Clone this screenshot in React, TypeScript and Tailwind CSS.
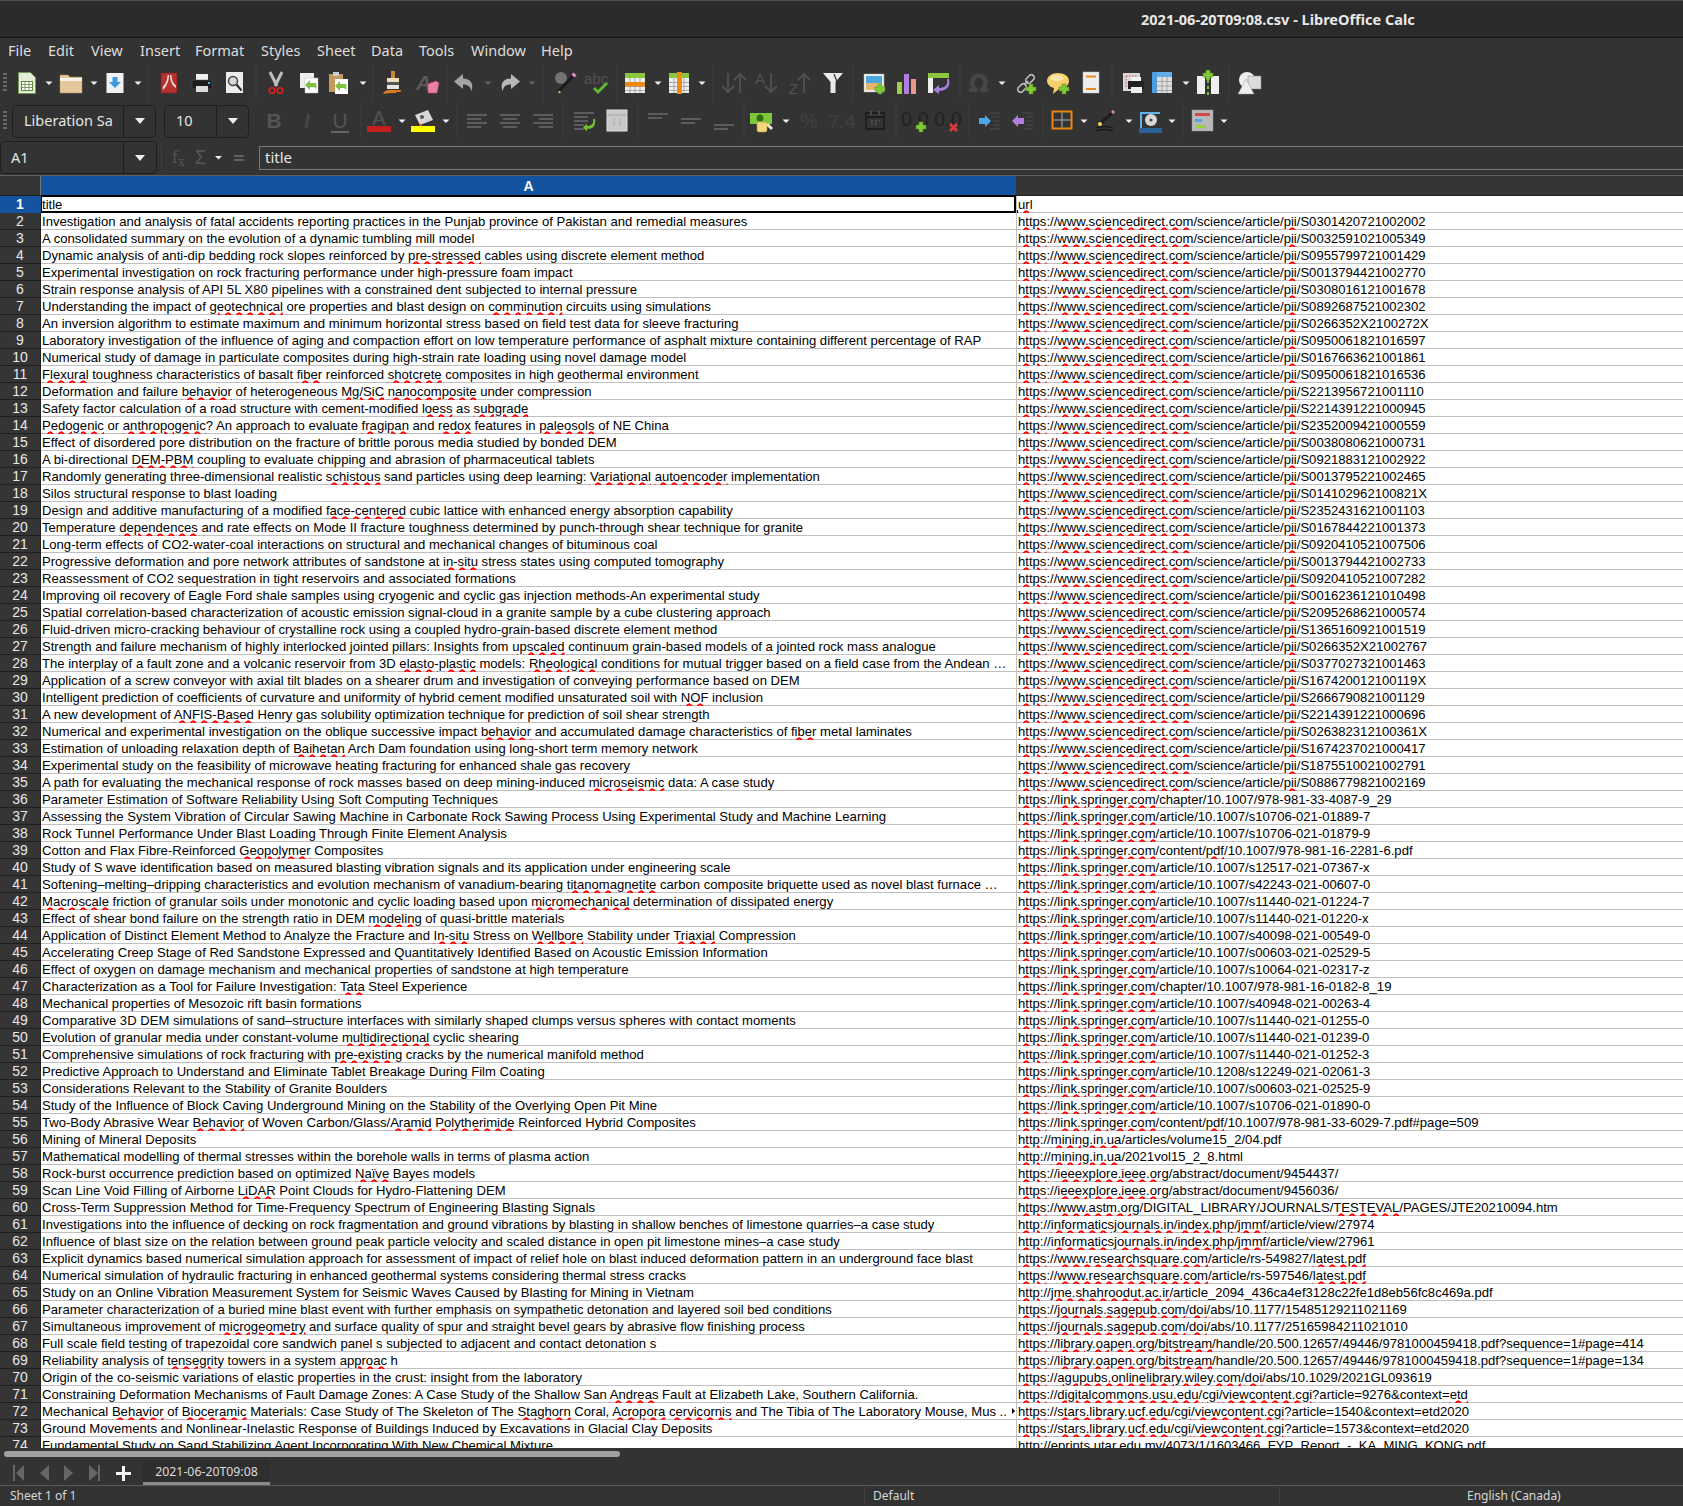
import type { ReactNode } from 'react';

const SD = (id: string) => `~https~://~www.sciencedirect.com~/science/article/~pii~/${id}`;
const SP = (rest: string) => `~https~://~link.springer.com~/${rest}`;
const SA = (id: string) => SP(`article/10.1007/${id}`);

const ROWS: [string, string][] = [
  ['title', '~url~'],
  ['Investigation and analysis of fatal accidents reporting practices in the Punjab province of Pakistan and remedial measures', SD('S0301420721002002')],
  ['A consolidated summary on the evolution of a dynamic tumbling mill model', SD('S0032591021005349')],
  ['Dynamic analysis of anti-dip bedding rock slopes reinforced by ~pre-stressed~ cables using discrete element method', SD('S0955799721001429')],
  ['Experimental investigation on rock fracturing performance under high-pressure foam impact', SD('S0013794421002770')],
  ['Strain response analysis of API 5L X80 pipelines with a constrained dent subjected to internal pressure', SD('S0308016121001678')],
  ['Understanding the impact of ~geotechnical~ ore properties and blast design on ~comminution~ circuits using simulations', SD('S0892687521002302')],
  ['An inversion algorithm to estimate maximum and minimum horizontal stress based on field test data for sleeve fracturing', SD('S0266352X2100272X')],
  ['Laboratory investigation of the influence of aging and compaction effort on low temperature performance of asphalt mixture containing different percentage of RAP', SD('S0950061821016597')],
  ['Numerical study of damage in particulate composites during high-strain rate loading using novel damage model', SD('S0167663621001861')],
  ['~Flexural~ toughness characteristics of basalt ~fiber~ reinforced ~shotcrete~ composites in high geothermal environment', SD('S0950061821016536')],
  ['Deformation and failure ~behavior~ of heterogeneous ~Mg/SiC~ ~nanocomposite~ under compression', SD('S2213956721001110')],
  ['Safety factor calculation of a road structure with cement-modified ~loess~ as ~subgrade~', SD('S2214391221000945')],
  ['~Pedogenic~ or ~anthropogenic~? An approach to evaluate ~fragipan~ and ~redox~ features in ~paleosols~ of NE China', SD('S2352009421000559')],
  ['Effect of disordered pore distribution on the fracture of brittle porous media studied by bonded DEM', SD('S0038080621000731')],
  ['A bi-directional ~DEM-PBM~ coupling to evaluate chipping and abrasion of pharmaceutical tablets', SD('S0921883121002922')],
  ['Randomly generating three-dimensional realistic ~schistous~ sand particles using deep learning: ~Variational~ ~autoencoder~ implementation', SD('S0013795221002465')],
  ['Silos structural response to blast loading', SD('S014102962100821X')],
  ['Design and additive manufacturing of a modified ~face-centered~ cubic lattice with enhanced energy absorption capability', SD('S2352431621001103')],
  ['Temperature ~dependences~ and rate effects on Mode II fracture toughness determined by punch-through shear technique for granite', SD('S0167844221001373')],
  ['Long-term effects of CO2-water-coal interactions on structural and mechanical changes of bituminous coal', SD('S0920410521007506')],
  ['Progressive deformation and pore network attributes of sandstone at ~in-situ~ stress states using computed tomography', SD('S0013794421002733')],
  ['Reassessment of CO2 sequestration in tight reservoirs and associated formations', SD('S0920410521007282')],
  ['Improving oil recovery of Eagle Ford shale samples using cryogenic and cyclic gas injection methods-An experimental study', SD('S0016236121010498')],
  ['Spatial correlation-based characterization of acoustic emission signal-cloud in a granite sample by a cube clustering approach', SD('S2095268621000574')],
  ['Fluid-driven micro-cracking behaviour of crystalline rock using a coupled hydro-grain-based discrete element method', SD('S1365160921001519')],
  ['Strength and failure mechanism of highly interlocked jointed pillars: Insights from ~upscaled~ continuum grain-based models of a jointed rock mass analogue', SD('S0266352X21002767')],
  ['The interplay of a fault zone and a volcanic reservoir from 3D ~elasto-plastic~ models: ~Rheological~ conditions for mutual trigger based on a field case from the Andean …', SD('S0377027321001463')],
  ['Application of a screw conveyor with axial tilt blades on a shearer drum and investigation of conveying performance based on DEM', SD('S167420012100119X')],
  ['Intelligent prediction of coefficients of curvature and uniformity of hybrid cement modified unsaturated soil with ~NOF~ inclusion', SD('S2666790821001129')],
  ['A new development of ~ANFIS-Based~ Henry gas solubility optimization technique for prediction of soil shear strength', SD('S2214391221000696')],
  ['Numerical and experimental investigation on the oblique successive impact ~behavior~ and accumulated damage characteristics of ~fiber~ metal laminates', SD('S026382312100361X')],
  ['Estimation of unloading relaxation depth of ~Baihetan~ Arch Dam foundation using long-short term memory network', SD('S1674237021000417')],
  ['Experimental study on the feasibility of microwave heating fracturing for enhanced shale gas recovery', SD('S1875510021002791')],
  ['A path for evaluating the mechanical response of rock masses based on deep mining-induced ~microseismic~ data: A case study', SD('S0886779821002169')],
  ['Parameter Estimation of Software Reliability Using Soft Computing Techniques', SP('chapter/10.1007/978-981-33-4087-9_29')],
  ['Assessing the System Vibration of Circular Sawing Machine in Carbonate Rock Sawing Process Using Experimental Study and Machine Learning', SA('s10706-021-01889-7')],
  ['Rock Tunnel Performance Under Blast Loading Through Finite Element Analysis', SA('s10706-021-01879-9')],
  ['Cotton and Flax Fibre-Reinforced ~Geopolymer~ Composites', SP('content/~pdf~/10.1007/978-981-16-2281-6.pdf')],
  ['Study of S wave identification based on measured blasting vibration signals and its application under engineering scale', SA('s12517-021-07367-x')],
  ['Softening–melting–dripping characteristics and evolution mechanism of vanadium-bearing ~titanomagnetite~ carbon composite briquette used as novel blast furnace …', SA('s42243-021-00607-0')],
  ['~Macroscale~ friction of granular soils under monotonic and cyclic loading based upon ~micromechanical~ determination of dissipated energy', SA('s11440-021-01224-7')],
  ['Effect of shear bond failure on the strength ratio in DEM ~modeling~ of quasi-brittle materials', SA('s11440-021-01220-x')],
  ['Application of Distinct Element Method to Analyze the Fracture and ~In-situ~ Stress on ~Wellbore~ Stability under ~Triaxial~ Compression', SA('s40098-021-00549-0')],
  ['Accelerating Creep Stage of Red Sandstone Expressed and Quantitatively Identified Based on Acoustic Emission Information', SA('s00603-021-02529-5')],
  ['Effect of oxygen on damage mechanism and mechanical properties of sandstone at high temperature', SA('s10064-021-02317-z')],
  ['Characterization as a Tool for Failure Investigation: ~Tata~ Steel Experience', SP('chapter/10.1007/978-981-16-0182-8_19')],
  ['Mechanical properties of Mesozoic rift basin formations', SA('s40948-021-00263-4')],
  ['Comparative 3D DEM simulations of sand–structure interfaces with similarly shaped clumps versus spheres with contact moments', SA('s11440-021-01255-0')],
  ['Evolution of granular media under constant-volume ~multidirectional~ cyclic shearing', SA('s11440-021-01239-0')],
  ['Comprehensive simulations of rock fracturing with ~pre-existing~ cracks by the numerical manifold method', SA('s11440-021-01252-3')],
  ['Predictive Approach to Understand and Eliminate Tablet Breakage During Film Coating', SP('article/10.1208/s12249-021-02061-3')],
  ['Considerations Relevant to the Stability of Granite Boulders', SA('s00603-021-02525-9')],
  ['Study of the Influence of Block Caving Underground Mining on the Stability of the Overlying Open Pit Mine', SA('s10706-021-01890-0')],
  ['Two-Body Abrasive Wear ~Behavior~ of Woven Carbon/Glass/~Aramid~ ~Polytherimide~ Reinforced Hybrid Composites', SP('content/~pdf~/10.1007/978-981-33-6029-7.pdf#page=509')],
  ['Mining of Mineral Deposits', '~http~://~mining.in.ua~/articles/volume15_2/04.pdf'],
  ['Mathematical modelling of thermal stresses within the borehole walls in terms of plasma action', '~http~://~mining.in.ua~/2021vol15_2_8.html'],
  ['Rock-burst occurrence prediction based on optimized ~Naïve~ Bayes models', '~https~://~ieeexplore.ieee.org~/abstract/document/9454437/'],
  ['Scan Line Void Filling of Airborne ~LiDAR~ Point Clouds for Hydro-Flattening DEM', '~https~://~ieeexplore.ieee.org~/abstract/document/9456036/'],
  ['Cross-Term Suppression Method for Time-Frequency Spectrum of Engineering Blasting Signals', '~https~://~www.astm.org~/DIGITAL_LIBRARY/JOURNALS/~TESTEVAL~/PAGES/JTE20210094.htm'],
  ['Investigations into the influence of decking on rock fragmentation and ground vibrations by blasting in shallow benches of limestone quarries–a case study', '~http~://~informaticsjournals.in~/~index.php~/~jmmf~/article/view/27974'],
  ['Influence of blast size on the relation between ground peak particle velocity and scaled distance in open pit limestone mines–a case study', '~http~://~informaticsjournals.in~/~index.php~/~jmmf~/article/view/27961'],
  ['Explicit dynamics based numerical simulation approach for assessment of impact of relief hole on blast induced deformation pattern in an underground face blast', '~https~://~www.researchsquare.com~/article/rs-549827/~latest.pdf~'],
  ['Numerical simulation of hydraulic fracturing in enhanced geothermal systems considering thermal stress cracks', '~https~://~www.researchsquare.com~/article/rs-597546/~latest.pdf~'],
  ['Study on an Online Vibration Measurement System for Seismic Waves Caused by Blasting for Mining in Vietnam', '~http~://~jme.shahroodut.ac.ir~/article_2094_436ca4ef3128c22fe1d8eb56fc8c469a.pdf'],
  ['Parameter characterization of a buried mine blast event with further emphasis on sympathetic detonation and layered soil bed conditions', '~https~://~journals.sagepub.com~/~doi~/abs/10.1177/15485129211021169'],
  ['Simultaneous improvement of ~microgeometry~ and surface quality of spur and straight bevel gears by abrasive flow finishing process', '~https~://~journals.sagepub.com~/~doi~/abs/10.1177/25165984211021010'],
  ['Full scale field testing of trapezoidal core sandwich panel s subjected to adjacent and contact detonation s', '~https~://~library.oapen.org~/~bitstream~/handle/20.500.12657/49446/9781000459418.pdf?sequence=1#page=414'],
  ['Reliability analysis of ~tensegrity~ towers in a system ~approac~ h', '~https~://~library.oapen.org~/~bitstream~/handle/20.500.12657/49446/9781000459418.pdf?sequence=1#page=134'],
  ['Origin of the co-seismic variations of elastic properties in the crust: insight from the laboratory', '~https~://~agupubs.onlinelibrary.wiley.com~/~doi~/abs/10.1029/2021GL093619'],
  ['Constraining Deformation Mechanisms of Fault Damage Zones: A Case Study of the Shallow San ~Andreas~ Fault at Elizabeth Lake, Southern California.', '~https~://~digitalcommons.usu.edu~/~cgi~/~viewcontent.cgi~?article=9276&context=~etd~'],
  ['Mechanical ~Behavior~ of ~Bioceramic~ Materials: Case Study of The Skeleton of The ~Staghorn~ Coral, ~Acropora~ ~cervicornis~ and The Tibia of The Laboratory Mouse, Mus ..', '~https~://~stars.library.ucf.edu~/~cgi~/~viewcontent.cgi~?article=1540&context=etd2020'],
  ['Ground Movements and Nonlinear-Inelastic Response of Buildings Induced by Excavations in Glacial Clay Deposits', '~https~://~stars.library.ucf.edu~/~cgi~/~viewcontent.cgi~?article=1573&context=etd2020'],
  ['Fundamental Study on Sand Stabilizing Agent Incorporating With New Chemical Mixture', 'http://eprints.utar.edu.my/4073/1/1603466_FYP_Report_-_KA_MING_KONG.pdf'],
];

const MENU: [string, string][] = [
  ['File', 'w-[40px]'], ['Edit', 'w-[43px]'], ['View', 'w-[49px]'], ['Insert', 'w-[55px]'], ['Format', 'w-[66px]'], ['Styles', 'w-[56px]'],
  ['Sheet', 'w-[54px]'], ['Data', 'w-[48px]'], ['Tools', 'w-[52px]'], ['Window', 'w-[70px]'], ['Help', 'w-[50px]'],
];

function Rich({ t }: { t: string }) {
  return (
    <>
      {t.split('~').map((s, i) =>
        i % 2 ? (
          <span key={i} className="underline decoration-wavy decoration-[#ff0000] decoration-[1.5px] underline-offset-[1px]">{s}</span>
        ) : (
          s
        ),
      )}
    </>
  );
}

function Ico({ children }: { children: ReactNode }) {
  return <svg width="24" height="24" viewBox="0 0 24 24" className="shrink-0 overflow-visible">{children}</svg>;
}

// one toolbar slot: 24px icon box, slot width is the distance to the next slot
function T({ w, children }: { w: string; children: ReactNode }) {
  return <div className={`${w} shrink-0 h-6 flex items-center`}>{children}</div>;
}

const Plus = ({ x, y }: { x: number; y: number }) => (
  <path d={`M${x - 2} ${y - 5}h4v3h3v4h-3v3h-4v-3h-3v-4h3z`} fill="#80c935" stroke="#4f8a1c" strokeWidth=".5" />
);
const Drop = () => <Ico><path d="M8.5 10.5h7l-3.5 3.5z" fill="#eeeeee" /></Ico>;
const DimDrop = () => <Ico><path d="M8.5 10.5h7l-3.5 3.5z" fill="#5e5e5e" /></Ico>;
const Sep = () => <Ico><path d="M12 -6v36" stroke="#3f3f3f" strokeWidth="1" /></Ico>;
const Handle = () => (
  <div className="w-[4px] h-[20px] ml-[3px] shrink-0 flex flex-col gap-[2px]">
    {[0, 1, 2, 3, 4].map((i) => <div key={i} className="h-[2px] bg-[#6a6a6a]" />)}
  </div>
);

const Table = ({ children }: { children?: ReactNode }) => (
  <>
    <rect x="2" y="2" width="20" height="5" fill="#8cc63f" />
    <rect x="2" y="7" width="20" height="15" fill="#eeeeee" />
    {children}
    <path d="M2 11.5h20M2 15.5h20M2 19.5h20M7 7v15M12 7v15M17 7v15" stroke="#9a9a9a" strokeWidth=".8" />
  </>
);

const NewDoc = () => <Ico><path d="M3.5 1.5h12l5 5v16h-17z" fill="#e3ecd8" stroke="#6f9a50" /><rect x="6.5" y="10.5" width="11" height="9" fill="#fff" stroke="#5e8c3c" /><path d="M6.5 13.5h11M6.5 16.500h11M10 10.500v9M14 10.500v9" stroke="#5e8c3c" strokeWidth=".8" /></Ico>;
const Folder = () => <Ico><path d="M1 4h8l2 2h12v16H1z" fill="#e5c99c" stroke="#b08d5c" strokeWidth=".5" /><rect x="1" y="7" width="22" height="3" fill="#f6f2ea" /></Ico>;
const Save = () => <Ico><rect x="3.500" y="2" width="17" height="20" fill="#f1f1f1" /><path d="M9.500 6h5v5h3.500l-6 6-6-6h3.500z" fill="#3d9ae0" /></Ico>;
const Pdf = () => <Ico><rect x="4" y="2" width="16" height="20" fill="#b5302e" stroke="#8a2120" strokeWidth=".6" /><path d="M6 19c3-3 6-8 6-15h-1.500c0 5-2.500 10-5 12zM13 4c0 6 2 11 6 13v-2.500c-3-2-4.500-6-4.500-10.500z" fill="#f0d8d0" /></Ico>;
const Printer = () => <Ico><rect x="6" y="3" width="12" height="7" fill="#efefef" /><rect x="2" y="9" width="20" height="9" rx="2" fill="#1c1c1c" stroke="#555" strokeWidth=".5" /><rect x="6" y="15" width="12" height="6" fill="#dcdcdc" /><rect x="18" y="11" width="2" height="2" fill="#35c0f0" /></Ico>;
const Preview = () => <Ico><rect x="3" y="1" width="17" height="21" fill="#ededed" /><circle cx="10" cy="10" r="4.500" fill="#d8d8d8" stroke="#444" strokeWidth="1.500" /><path d="M13.500 13.500l5 6" stroke="#2a2a2a" strokeWidth="2" /></Ico>;
const Cut = () => <Ico><path d="M6 1l7 14M18 1l-7 14" stroke="#bdbdbd" strokeWidth="3" /><circle cx="8" cy="19.500" r="2.800" fill="none" stroke="#e02020" strokeWidth="1.600" /><circle cx="16" cy="19.500" r="2.800" fill="none" stroke="#e02020" strokeWidth="1.600" /></Ico>;
const GreenArrow = ({ x, y }: { x: number; y: number }) => <path d={`M${x + 6} ${y - 2}h-6v-3l-5 5 5 5v-3h3c2 0 3 1 3 3 1-4 0-7 0-7z`} fill="#7cc340" />;
const Copy = () => <Ico><rect x="3" y="2" width="14" height="15" fill="#eeeeee" /><rect x="8" y="7" width="13" height="15" fill="#fff" stroke="#bbb" strokeWidth=".5" /><GreenArrow x={13} y={14} /></Ico>;
const Paste = () => <Ico><rect x="2" y="3" width="14" height="18" fill="#c4985a" /><rect x="6" y="1" width="6" height="4" fill="#cccccc" /><rect x="8" y="8" width="13" height="15" fill="#fff" /><GreenArrow x={13} y={15} /></Ico>;
const Clone = () => <Ico><rect x="10" y="0" width="4" height="7" fill="#c8873a" /><rect x="6" y="7" width="12" height="4" fill="#f0dfb8" /><rect x="6" y="11" width="12" height="3" fill="#555" /><rect x="6" y="14" width="12" height="4" fill="#e6e6e6" /><path d="M2 23c1-3 4-4 6-4h12c1 2-2 2-4 2l-2 1c-4 0-8 0-12 1z" fill="#e07b1c" /></Ico>;
const Clear = () => <Ico><text x="0" y="19" fontSize="21" fontStyle="italic" fontWeight="700" fill="#5a5a5a" fontFamily="Liberation Sans">A</text><path d="M12 13l8-3 3 2-2 10h-9z" fill="#ea7fa6" stroke="#b04a70" strokeWidth=".5" /></Ico>;
const Undo = () => <Ico><path d="M10 3L1 10.500l9 7.500v-4.500c5 0 7.500 2 8.500 7 2.500-8-.5-12.500-8.500-13z" fill="#a4a4a4" /></Ico>;
const Redo = () => <Ico><path d="M14 3l9 7.500-9 7.500v-4.500c-5 0-7.500 2-8.500 7-2.500-8 .5-12.500 8.500-13z" fill="#b8b8b8" /></Ico>;
const FindRep = () => <Ico><circle cx="8" cy="7" r="6" fill="#737373" /><path d="M21 4L6 20" stroke="#1c1c1c" strokeWidth="3" /><path d="M19.500 2.500l3 3" stroke="#e58ac0" strokeWidth="3" /><path d="M6.500 19.500l-1.500 3 3-1z" fill="#e8d95c" /></Ico>;
const Spell = () => <Ico><text x="-1" y="13" fontSize="15" fill="#515151" fontFamily="Liberation Sans">abc</text><path d="M9 17l4 4 9-9" fill="none" stroke="#62b82e" strokeWidth="3" /></Ico>;
const Rows = () => <Ico><Table /><rect x="2" y="11" width="20" height="4.500" fill="#f08a10" /></Ico>;
const Cols = () => <Ico><Table /><rect x="10" y="1" width="5" height="22" fill="#f08a10" /></Ico>;
const Arrow = ({ x, up }: { x: number; up: boolean }) => (
  <path d={up ? `M${x} 22V3M${x - 6} 9l6-6 6 6` : `M${x} 2v19M${x - 6} 15l6 6 6-6`} fill="none" stroke="#525252" strokeWidth="1.800" />
);
const Sort = () => <Ico><Arrow x={6} up={false} /><Arrow x={18} up={true} /></Ico>;
const SortA = () => <Ico><text x="-1" y="13" fontSize="15" fill="#525252" fontFamily="Liberation Sans">A</text><Arrow x={15} up={false} /></Ico>;
const SortZ = () => <Ico><text x="0" y="23" fontSize="15" fill="#525252" fontFamily="Liberation Sans">Z</text><Arrow x={15} up={true} /></Ico>;
const Filter = () => <Ico><path d="M2 2h20l-7.500 9v11h-5V11z" fill="#eaeaea" /><path d="M13 3l7 18" stroke="#333" strokeWidth="1.200" /></Ico>;
const ImageIco = () => <Ico><rect x="2" y="3" width="20" height="18" fill="#f2f2f2" stroke="#aaa" strokeWidth=".5" /><rect x="4" y="5" width="16" height="7" fill="#4aa6de" /><rect x="4" y="12" width="16" height="7" fill="#e5b56a" /><Plus x={18} y={18} /></Ico>;
const Chart = () => <Ico><rect x="2" y="11" width="5" height="12" fill="#9bd04b" /><rect x="9" y="3" width="5" height="20" fill="#b07fe0" /><rect x="16" y="8" width="5" height="15" fill="#e89a88" /></Ico>;
const Pivot = () => <Ico><rect x="1" y="2" width="21" height="5" fill="#8cc63f" /><rect x="1" y="7" width="5" height="15" fill="#eeeeee" /><path d="M20 8c1 6-2 9-8 9v-3l-6 5 6 4v-3c7 0 12-4 10-12z" fill="#a77fd8" /></Ico>;
const Omega = () => <Ico><text x="1.500" y="21" fontSize="24" fontWeight="700" fill="#474747" fontFamily="DejaVu Sans">Ω</text></Ico>;
const Link = () => <Ico><path d="M4 17l4-4a3 3 0 0 1 4 4l-4 4a3 3 0 0 1-4-4zM12 8l4-4a3 3 0 0 1 4 4l-4 4a3 3 0 0 1-4-4z" fill="none" stroke="#bdbdbd" strokeWidth="1.600" /><path d="M10 14l4-4" stroke="#bdbdbd" strokeWidth="1.600" /><Plus x={17} y={18} /></Ico>;
const Comment = () => <Ico><path d="M12 2c6 0 11 3 11 8s-5 8-10 8l-6 5 1-6C4 16 1 13 1 10c0-5 5-8 11-8z" fill="#f7cf6b" /><ellipse cx="11" cy="7" rx="7" ry="3" fill="#fbe6ac" /><Plus x={18} y={18} /></Ico>;
const Header = () => <Ico><rect x="4" y="1" width="16" height="21" fill="#eeeeee" stroke="#bdbdbd" strokeWidth=".5" /><path d="M7 5.500h10M7 18h10" stroke="#ee8a1c" strokeWidth="2" /></Ico>;
const PrintArea = () => <Ico><rect x="2" y="2" width="17" height="18" fill="#d8d8d8" /><path d="M5 5h11M5 5v12" stroke="#d84c4c" strokeWidth="1" strokeDasharray="1.500 1.500" /><rect x="10" y="6" width="10" height="5" fill="#f4f4f4" /><rect x="7" y="10" width="16" height="8" fill="#222" /><rect x="10" y="16" width="11" height="6" fill="#eeeeee" /></Ico>;
const Freeze = () => <Ico><rect x="2" y="1" width="20" height="21" fill="#dedede" /><rect x="2" y="1" width="20" height="5" fill="#63aee8" /><rect x="2" y="1" width="5" height="21" fill="#4d9ee0" /><path d="M7 10.500h15M7 15h15M7 19.500h15M12 6v16M17 6v16" stroke="#9a9a9a" strokeWidth=".8" /></Ico>;
const Split = () => <Ico><rect x="1" y="5" width="8" height="18" fill="#eeeeee" /><rect x="15" y="5" width="8" height="18" fill="#eeeeee" /><path d="M12 3v21" stroke="#78c035" strokeWidth="2" strokeDasharray="3 3" /><Plus x={12} y={4} /></Ico>;
const Shapes = () => <Ico><circle cx="9" cy="9" r="8" fill="#eeeeee" /><rect x="10" y="5" width="13" height="13" fill="#dcdcdc" stroke="#8a8a8a" strokeWidth=".5" /><path d="M8 8l8 15H0z" fill="#eeeeee" stroke="#9a9a9a" strokeWidth=".5" /></Ico>;

const Letter = ({ c, italic, under }: { c: string; italic?: boolean; under?: boolean }) => (
  <Ico>
    <text x="12" y="19" textAnchor="middle" fontSize="21" fontWeight={under ? 400 : 700} fontStyle={italic ? 'italic' : 'normal'} fill={italic ? '#474747' : '#555555'} fontFamily="Liberation Sans">{c}</text>
    {under && <path d="M3 23h18" stroke="#777" strokeWidth="1.500" />}
  </Ico>
);
const FontColor = () => <Ico><text x="12" y="16" textAnchor="middle" fontSize="20" fill="#525252" fontFamily="Liberation Sans">A</text><rect x="0" y="17" width="24" height="6" fill="#c41f1f" /></Ico>;
const BgColor = () => <Ico><path d="M4 6l13-5 5 10-13 5z" fill="#d8d8d8" /><circle cx="11" cy="8" r="2" fill="#555" /><path d="M8 17l2-3 1 3z" fill="#e8701c" /><rect x="0" y="17" width="24" height="6" fill="#ffff00" /></Ico>;
const Lines = ({ d }: { d: string }) => <Ico><path d={d} stroke="#6b6b6b" strokeWidth="1.600" /></Ico>;
const Wrap = () => <Ico><path d="M2 4h20M2 8h14M2 12h14M2 16h10M2 20h10" stroke="#6b6b6b" strokeWidth="1.600" /><path d="M21 10c1 5-2 7-6 7v-2.500l-4 4 4 4v-2.500c6 0 9-3 8-10z" fill="#74bb36" /></Ico>;
const Merge = () => <Ico><rect x="2" y="1" width="20" height="21" fill="#c8c8c8" stroke="#e2e2e2" /><path d="M9 9v8M15 9v8M2 6h20" stroke="#a8a8a8" /></Ico>;
const Currency = () => <Ico><rect x="0" y="4" width="22" height="11" fill="#7fc73a" /><circle cx="10" cy="9" r="3.500" fill="#2f6e18" /><rect x="7" y="13" width="10" height="10" rx="2" fill="#f2d67a" stroke="#b79640" strokeWidth=".5" /><path d="M17 15l5 5" stroke="#eee6c0" strokeWidth="3" /></Ico>;
const Pct = () => <Ico><text x="12" y="19" textAnchor="middle" fontSize="20" fontWeight="700" fill="#3e3e3e" fontFamily="Liberation Sans">%</text></Ico>;
const Num = () => <Ico><text x="12" y="19" textAnchor="middle" fontSize="19" fontWeight="700" fill="#3e3e3e" fontFamily="Liberation Sans">7.4</text></Ico>;
const DateIco = () => <Ico><rect x="3" y="4" width="18" height="16" fill="none" stroke="#1e1e1e" strokeWidth="2" /><path d="M3 8h18" stroke="#1e1e1e" strokeWidth="2" /><path d="M8 2v4M16 2v4M8 12h2M12 12h2M16 12h1M8 15h2M12 15h2" stroke="#555" strokeWidth="1.500" /></Ico>;
const Dec = ({ del }: { del?: boolean }) => (
  <Ico>
    <text x="-2" y="17" fontSize="20" fill="#222222" fontFamily="Liberation Sans">0.0</text>
    {del ? <path d="M14 15l7 7M21 15l-7 7" stroke="#d63a3a" strokeWidth="3" /> : <Plus x={18} y={18} />}
  </Ico>
);
const Indent = ({ out }: { out?: boolean }) => (
  <Ico>
    <path d="M12 4h10M15 8h7M15 12h7M15 16h7M12 20h10" stroke="#444" strokeWidth="1.500" />
    {out ? <path d="M1 12l6-6v3h6v6H7v3z" fill="#b07fe0" /> : <path d="M13 12l-6-6v3H1v6h6v3z" fill="#4ba8e8" />}
  </Ico>
);
const Border = () => <Ico><rect x="2.500" y="2.500" width="19" height="17" fill="none" stroke="#ee8512" strokeWidth="2" /><path d="M12 3.500v15M3.500 11h17" stroke="#8c8c8c" strokeWidth="1.500" /></Ico>;
const LineStyle = () => <Ico><path d="M19 3L6 15" stroke="#1b1b1b" strokeWidth="3" /><path d="M18 4l2-2" stroke="#e58ac0" strokeWidth="3" /><circle cx="6" cy="15" r="2" fill="#e8d95c" /><path d="M2 19c5-2 12-2 17 0M2 22c5-2 12-2 17 0" stroke="#151515" strokeWidth="1.200" fill="none" /></Ico>;
const BgStyle = () => <Ico><path d="M3 19V4h19" fill="none" stroke="#5fb2ea" strokeWidth="2" /><circle cx="13" cy="11" r="6" fill="#d8d8d8" /><circle cx="13" cy="11" r="1.500" fill="#444" /><rect x="1" y="19" width="23" height="5" fill="#2c6098" /></Ico>;
const Cond = () => <Ico><rect x="2" y="1" width="21" height="21" fill="#b8b8b8" stroke="#999" strokeWidth=".5" /><rect x="5" y="4" width="15" height="3" fill="#cf4a4a" /><rect x="5" y="10" width="7" height="3" fill="#4fa8e4" /><rect x="5" y="16" width="11" height="3" fill="#9bd04b" /></Ico>;

const Box = ({ label, w, split, lx }: { label: string; w: string; split: string; lx: string }) => (
  <div className={`${w} h-[33px] shrink-0 flex rounded-[5px] border border-[#1f1f1f]`}>
    <div className={`${split} h-full flex items-center ${lx} text-[#e6e6e6] text-[14.500px] border-r border-[#1f1f1f] whitespace-nowrap overflow-hidden`}>{label}</div>
    <div className="flex-1 flex items-center justify-center"><svg width="12" height="8" viewBox="0 0 12 8"><path d="M1 1h10L6 7z" fill="#eeeeee" /></svg></div>
  </div>
);

export default function App() {
  return (
    <div className="w-[1683px] h-[1506px] overflow-hidden flex flex-col bg-[#333333] text-[#e6e6e6] font-['Noto_Sans',sans-serif]">
      {/* title bar */}
      <div className="h-[38px] shrink-0 bg-[#2b2b2b] border-t border-t-[#4c4c4c] border-b border-b-[#111111] flex items-center pt-[1px] pl-[1141px] text-[14.500px] font-bold text-[#e8e8e8] whitespace-nowrap">
        2021-06-20T09:08.csv - LibreOffice Calc
      </div>

      {/* menu */}
      <div className="h-[26px] shrink-0 flex items-center pl-[8px] text-[14.500px] text-[#dedede]">
        {MENU.map(([m, w]) => <div key={m} className={`${w} shrink-0`}>{m}</div>)}
      </div>

      {/* standard toolbar */}
      <div className="h-[38px] shrink-0 flex items-center">
        <Handle />
        <div className="flex items-center pl-[8px]">
          <T w="w-[22px]"><NewDoc /></T><T w="w-[22px]"><Drop /></T><T w="w-[23px]"><Folder /></T><T w="w-[21px]"><Drop /></T><T w="w-[23px]"><Save /></T><T w="w-[10px]"><Drop /></T>
          <T w="w-[21px]"><Sep /></T><T w="w-[33px]"><Pdf /></T><T w="w-[33px]"><Printer /></T><T w="w-[21px]"><Preview /></T><T w="w-[20px]"><Sep /></T>
          <T w="w-[33px]"><Cut /></T><T w="w-[30px]"><Copy /></T><T w="w-[24px]"><Paste /></T><T w="w-[10px]"><Drop /></T><T w="w-[20px]"><Sep /></T>
          <T w="w-[35px]"><Clone /></T><T w="w-[19px]"><Clear /></T><T w="w-[18px]"><Sep /></T><T w="w-[23px]"><Undo /></T><T w="w-[21px]"><DimDrop /></T><T w="w-[23px]"><Redo /></T><T w="w-[11px]"><DimDrop /></T>
          <T w="w-[22px]"><Sep /></T><T w="w-[32px]"><FindRep /></T><T w="w-[20px]"><Spell /></T><T w="w-[18px]"><Sep /></T>
          <T w="w-[23px]"><Rows /></T><T w="w-[21px]"><Drop /></T><T w="w-[23px]"><Cols /></T><T w="w-[11px]"><Drop /></T><T w="w-[21px]"><Sep /></T>
          <T w="w-[34px]"><Sort /></T><T w="w-[33px]"><SortA /></T><T w="w-[32px]"><SortZ /></T><T w="w-[20px]"><Filter /></T><T w="w-[21px]"><Sep /></T>
          <T w="w-[33px]"><ImageIco /></T><T w="w-[32px]"><Chart /></T><T w="w-[21px]"><Pivot /></T><T w="w-[19px]"><Sep /></T>
          <T w="w-[23px]"><Omega /></T><T w="w-[24px]"><Drop /></T><T w="w-[32px]"><Link /></T><T w="w-[33px]"><Comment /></T><T w="w-[21px]"><Header /></T><T w="w-[21px]"><Sep /></T>
          <T w="w-[29px]"><PrintArea /></T><T w="w-[24px]"><Freeze /></T><T w="w-[22px]"><Drop /></T><T w="w-[21px]"><Split /></T><T w="w-[21px]"><Sep /></T><T w="w-[24px]"><Shapes /></T>
        </div>
      </div>

      {/* formatting toolbar */}
      <div className="h-[38px] shrink-0 flex items-center">
        <Handle />
        <div className="ml-[5px]"><Box label="Liberation Sa" w="w-[144px]" split="w-[111px]" lx="pl-[11px]" /></div>
        <div className="ml-[8px]"><Box label="10" w="w-[85px]" split="w-[52px]" lx="pl-[11px]" /></div>
        <div className="ml-[13px] flex items-center">
          <T w="w-[33px]"><Letter c="B" /></T><T w="w-[33px]"><Letter c="I" italic /></T><T w="w-[21px]"><Letter c="U" under /></T><T w="w-[18px]"><Sep /></T>
          <T w="w-[23px]"><FontColor /></T><T w="w-[21px]"><Drop /></T><T w="w-[23px]"><BgColor /></T><T w="w-[11px]"><Drop /></T><T w="w-[20px]"><Sep /></T>
          <T w="w-[33px]"><Lines d="M2 6h20M2 10h14M2 14h20M2 18h14" /></T><T w="w-[33px]"><Lines d="M2 6h20M5 10h14M2 14h20M5 18h14" /></T><T w="w-[20px]"><Lines d="M2 6h20M8 10h14M2 14h20M8 18h14" /></T><T w="w-[21px]"><Sep /></T>
          <T w="w-[33px]"><Wrap /></T><T w="w-[21px]"><Merge /></T><T w="w-[20px]"><Sep /></T>
          <T w="w-[33px]"><Lines d="M2 5h20M2 9h14" /></T><T w="w-[33px]"><Lines d="M2 10h20M2 14h14" /></T><T w="w-[20px]"><Lines d="M2 16h20M2 20h14" /></T><T w="w-[18px]"><Sep /></T>
          <T w="w-[24px]"><Currency /></T><T w="w-[23px]"><Drop /></T><T w="w-[33px]"><Pct /></T><T w="w-[33px]"><Num /></T><T w="w-[21px]"><DateIco /></T><T w="w-[19px]"><Sep /></T>
          <T w="w-[33px]"><Dec /></T><T w="w-[21px]"><Dec del /></T><T w="w-[21px]"><Sep /></T>
          <T w="w-[33px]"><Indent /></T><T w="w-[20px]"><Indent out /></T><T w="w-[19px]"><Sep /></T>
          <T w="w-[22px]"><Border /></T><T w="w-[22px]"><Drop /></T><T w="w-[23px]"><LineStyle /></T><T w="w-[21px]"><Drop /></T><T w="w-[22px]"><BgStyle /></T><T w="w-[11px]"><Drop /></T><T w="w-[19px]"><Sep /></T>
          <T w="w-[22px]"><Cond /></T><T w="w-[24px]"><Drop /></T>
        </div>
      </div>

      {/* formula bar */}
      <div className="h-[35px] shrink-0 flex items-center">
        <Box label="A1" w="w-[157px]" split="w-[123px]" lx="pl-[10px]" />
        <div className="w-px h-[26px] bg-[#3f3f3f] ml-[4px] shrink-0" />
        <div className="w-[97px] shrink-0 flex items-center">
          <div className="w-[10px]" />
          <span className="w-[23px] text-[16px] font-['DejaVu_Serif',serif] text-[#555555]">f<sub>x</sub></span>
          <span className="w-[14px] text-[19px] text-[#555555]">Σ</span>
          <svg width="10" height="8" viewBox="0 0 10 8" className="ml-[5px]"><path d="M1 2h7l-3.500 3.500z" fill="#eeeeee" /></svg>
          <span className="ml-[9px] text-[20px] font-bold text-[#636363]">=</span>
        </div>
        <div className="flex-1 h-[24px] border border-r-0 border-[#7a7a7a] flex items-center pl-[5px] text-[15px] text-[#e6e6e6]">title</div>
      </div>

      {/* sheet */}
      <div className="h-[1273px] shrink-0 flex flex-col font-['Liberation_Sans',sans-serif] text-[13.100px] overflow-hidden border-t border-[#606060]">
        <div className="h-[20px] shrink-0 flex bg-[#353535] border-b border-[#1f1f1f]">
          <div className="w-[41px] shrink-0 border-r border-[#777777]" />
          <div className="w-[975px] shrink-0 bg-[#14539f] text-center text-white font-bold text-[14px] leading-[20px]">A</div>
        </div>
        {ROWS.map(([title, url], i) => (
          <div key={i} className="h-[17px] shrink-0 flex">
            <div className={`w-[41px] shrink-0 text-center text-[14px] leading-[17px] border-r border-b ${i === 0 ? 'bg-[#14539f] text-white font-bold border-[#14539f]' : 'bg-[#353535] text-[#e8e8e8] border-[#1f1f1f]'}`}>{i + 1}</div>
            <div className="relative w-[976px] shrink-0 bg-white border-r border-b border-[#c0c0c0] pl-[1px] leading-[17px] text-black whitespace-pre overflow-x-clip">
              <Rich t={title} />
              {i === 0 && <div className="absolute -left-px -top-px w-[976px] h-[18px] border-2 border-black" />}
              {i === 71 && <div className="absolute right-[1px] top-[5px] w-0 h-0 border-y-[3px] border-y-transparent border-l-[3px] border-l-black" />}
            </div>
            <div className="relative flex-1 bg-white border-b border-[#c0c0c0] pl-[1px] leading-[17px] text-black whitespace-pre overflow-x-clip">
              <Rich t={url} />
              {i === 0 && <div className="absolute -left-[4px] top-[14px] w-[5px] h-[5px] bg-black" />}
            </div>
          </div>
        ))}
      </div>

      {/* scrollbar, tabs, status */}
      <div className="h-[12px] shrink-0 bg-[#333333] flex items-center pl-[4px]">
        <div className="w-[616px] h-[6px] rounded-full bg-[#a0a0a0]" />
      </div>
      <div className="h-[25px] shrink-0 flex items-stretch text-[12.300px]">
        <div className="w-[143px] shrink-0 flex items-center pl-[13px]">
          <svg width="122" height="20" viewBox="0 0 122 20">
            <path d="M0 2h2v16H0zM11 2v16L3 10z" fill="#666" />
            <path d="M36 2v16L27 10z" fill="#666" />
            <path d="M51 2v16l9-8z" fill="#666" />
            <path d="M76 2l9 8-9 8zM85 2h2v16h-2z" fill="#666" />
            <path d="M109 3h3v6h6v3h-6v6h-3v-6h-6V9h6z" fill="#f4f4f4" />
          </svg>
        </div>
        <div className="w-[127px] shrink-0 flex items-center justify-center border-b-[3px] border-[#8a8a8a] bg-[#2e2e2e] text-[#dcdcdc] pt-[2px]">2021-06-20T09:08</div>
      </div>
      <div className="h-[21px] shrink-0 border-t border-[#5a5a5a] flex items-center text-[12px] text-[#d8d8d8]">
        <div className="w-[864px] shrink-0 pl-[10px]">Sheet 1 of 1</div>
        <div className="w-[415px] shrink-0 pl-[8px] border-l border-[#3f3f3f]">Default</div>
        <div className="flex-1 pl-[187px] border-l border-[#3f3f3f]">English (Canada)</div>
      </div>
    </div>
  );
}
